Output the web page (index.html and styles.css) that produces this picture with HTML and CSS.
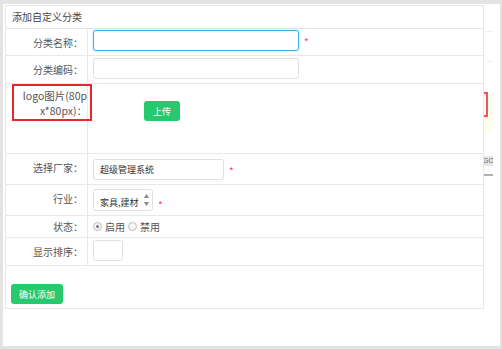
FILE: index.html
```html
<!DOCTYPE html>
<html lang="zh-CN">
<head>
  <meta charset="UTF-8">
  <title>添加自定义分类</title>
  <link rel="stylesheet" href="styles.css">
</head>

<body>
  <div class="frame">
    <div class="panel">
      <div class="panel-title">添加自定义分类</div>

      <div class="row row-name">
        <div class="label">分类名称：</div>
        <div class="field">
          <input type="text" class="ipt ipt-wide ipt-focus">
          <span class="req req-top">*</span>
        </div>
      </div>

      <div class="row row-code">
        <div class="label">分类编码：</div>
        <div class="field">
          <input type="text" class="ipt ipt-wide">
        </div>
      </div>

      <div class="row row-logo">
        <div class="label label-logo">logo图片(80px*80px)：</div>
        <div class="field field-logo">
          <button type="button" class="btn btn-upload">上传</button>
        </div>
        <div class="mark-box"></div>
      </div>

      <div class="row row-vendor">
        <div class="label">选择厂家：</div>
        <div class="field">
          <input type="text" class="ipt ipt-mid" value="超级管理系统">
          <span class="req">*</span>
        </div>
      </div>

      <div class="row row-trade">
        <div class="label">行业：</div>
        <div class="field">
          <div class="listbox">
            <span class="listbox-text">家具,建材</span>
            <span class="spin">
              <svg width="5" height="4" viewBox="0 0 5 4"><path d="M0 4 L2.5 0 L5 4 Z" fill="#888"/></svg>
              <svg width="5" height="4" viewBox="0 0 5 4"><path d="M0 0 L2.5 4 L5 0 Z" fill="#888"/></svg>
            </span>
          </div>
          <span class="req req-low">*</span>
        </div>
      </div>

      <div class="row row-state">
        <div class="label">状态：</div>
        <div class="field field-radio">
          <span class="radio radio-on"></span><span class="radio-text">启用</span>
          <span class="radio"></span><span class="radio-text">禁用</span>
        </div>
      </div>

      <div class="row row-sort">
        <div class="label">显示排序：</div>
        <div class="field">
          <input type="text" class="ipt ipt-small">
        </div>
      </div>

      <div class="row-submit">
        <button type="button" class="btn btn-submit">确认添加</button>
      </div>
    </div>

    <div class="side">
      <div class="side-line side-line-1"></div>
      <div class="side-line side-line-2"></div>
      <div class="side-note"><div class="side-bracket"></div></div>
      <div class="side-go">GO</div>
      <div class="side-bar"></div>
    </div>
  </div>
</body>
</html>
```

FILE: styles.css
```css
body {
  margin: 0;
  font-family: "Noto Sans CJK SC", "Microsoft YaHei", sans-serif;
  font-size: 10px;
  color: #555;
  background: #ffffff;
}

.frame {
  width: 502px;
  height: 349px;
  box-sizing: border-box;
  border-style: solid;
  border-color: #e3e3e3;
  border-width: 4px 2px 3px 3px;
  display: flex;
  align-items: flex-start;
}

.panel {
  width: 479px;
  margin: 1px 0 0 2px;
  border: 1px solid #e8e8e8;
  box-sizing: border-box;
  background: #ffffff;
}

.panel-title {
  height: 22px;
  line-height: 22px;
  padding-left: 6px;
  color: #444;
  border-bottom: 1px solid #e6e6e6;
}

.row {
  display: flex;
  border-bottom: 1px solid #e8e8e8;
  position: relative;
}

.label {
  width: 82px;
  flex-shrink: 0;
  box-sizing: border-box;
  border-right: 1px solid #e8e8e8;
  text-align: right;
  padding-right: 4px;
  display: flex;
  align-items: center;
  justify-content: flex-end;
}

.field {
  display: flex;
  align-items: flex-start;
  padding-left: 5px;
}

.row-name .field { padding-top: 1px; padding-bottom: 4px; }
.row-code .field { padding-top: 2px; padding-bottom: 4px; }
.row-vendor .field { padding-top: 5px; padding-bottom: 4px; }
.row-trade .field { padding-top: 4px; padding-bottom: 4px; }
.row-sort .field { padding-top: 2px; padding-bottom: 4px; }
.row-vendor .label, .row-trade .label { padding-bottom: 4px; }

.ipt {
  height: 21px;
  box-sizing: border-box;
  border: 1px solid #e0e0e0;
  border-radius: 3px;
  padding: 0 6px;
  font-family: inherit;
  font-size: 9px;
  color: #333;
  outline: none;
  background: #fff;
}

.ipt-wide { width: 206px; }
.ipt-mid { width: 131px; }
.ipt-small { width: 30px; }

.ipt-focus {
  border-color: #3fb3e4;
  box-shadow: 0 0 2px rgba(63, 179, 228, 0.5);
}

.req {
  color: #f2455a;
  font-size: 10px;
  margin-left: 5px;
  line-height: 1;
}

.req-top { margin-top: 7px; }
.row-vendor .req { margin-top: 7px; }
.req-low { margin-top: 11px; }

/* logo row */
.row-logo {
  height: 69px;
  box-sizing: content-box;
}

.label-logo {
  display: block;
  padding: 4px 0 0 14px;
  font-size: 10.5px;
  line-height: 15px;
  word-break: break-all;
}

.field-logo {
  padding: 17px 0 0 56px;
}

.mark-box {
  position: absolute;
  left: 6px;
  top: 0;
  width: 80px;
  height: 37px;
  box-sizing: border-box;
  border: 2px solid #e8262b;
}

.btn {
  border: none;
  border-radius: 3px;
  background: #27c96f;
  color: #ffffff;
  font-family: inherit;
  font-size: 9px;
  cursor: pointer;
  padding: 0;
}

.btn-upload {
  width: 36px;
  height: 20px;
}

/* trade listbox */
.listbox {
  width: 60px;
  height: 22px;
  box-sizing: border-box;
  border: 1px solid #e0e0e0;
  border-radius: 3px;
  display: flex;
  align-items: flex-end;
  justify-content: space-between;
  padding: 0 3px 2px 6px;
  color: #333;
  font-size: 9px;
}

.listbox-text { line-height: 11px; }

.spin {
  display: flex;
  flex-direction: column;
  gap: 4px;
  align-self: center;
  padding-top: 1px;
}

.spin svg { display: block; }

/* radios */
.row-state { height: 21px; }

.field-radio {
  align-items: center;
  padding-left: 5px;
}

.radio {
  width: 7px;
  height: 7px;
  border: 1px solid #bdbdbd;
  border-radius: 50%;
  background: #f4f4f4;
  display: inline-flex;
  align-items: center;
  justify-content: center;
}

.radio-on::after {
  content: "";
  width: 3px;
  height: 3px;
  border-radius: 50%;
  background: #777;
}

.radio-text {
  margin: 0 3px 0 3px;
  color: #555;
}

/* submit */
.row-submit {
  height: 42px;
  padding-left: 5px;
  box-sizing: border-box;
  padding-top: 18px;
}

.btn-submit {
  width: 52px;
  height: 20px;
}

/* cut-off content to the right */
.side {
  width: 9px;
  display: flex;
  flex-direction: column;
}

.side-line {
  height: 1px;
  background: #ececec;
  margin-left: 3px;
}

.side-line-1 { margin-top: 27px; }
.side-line-2 { margin-top: 29px; }

.side-note {
  margin-top: 30px;
  height: 42px;
  background: #fdfdf0;
}

.side-bracket {
  width: 2px;
  height: 21px;
  border: 2px solid #f2545b;
  border-left: none;
}

.side-go {
  margin-top: 22px;
  height: 10px;
  background: #e6e6e6;
  color: #666;
  font-family: "Liberation Sans", sans-serif;
  font-size: 7px;
  line-height: 10px;
  overflow: hidden;
  white-space: nowrap;
  text-indent: -1px;
}

.side-bar {
  margin-top: 8px;
  height: 2px;
  background: #b0b0b0;
}
```
